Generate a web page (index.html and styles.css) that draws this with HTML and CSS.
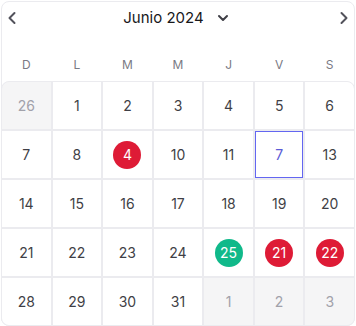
FILE: index.html
```html
<!DOCTYPE html>
<html lang="es">
<head>
<meta charset="utf-8">
<title>Calendario</title>
<link rel="stylesheet" href="styles.css">
</head>
<body>
<div class="card">
  <div class="header">
    <button class="nav" aria-label="Anterior">
      <svg width="16" height="16" viewBox="0 0 16 16"><polyline points="10.5,3 5.5,8 10.5,13" fill="none" stroke="currentColor" stroke-width="2" stroke-linecap="round" stroke-linejoin="round"/></svg>
    </button>
    <div class="title">
      <span class="month">Junio 2024</span>
      <svg class="caret" width="12" height="8" viewBox="0 0 12 8"><polyline points="2,2 6,6 10,2" fill="none" stroke="currentColor" stroke-width="2" stroke-linecap="round" stroke-linejoin="round"/></svg>
    </div>
    <button class="nav" aria-label="Siguiente">
      <svg width="16" height="16" viewBox="0 0 16 16"><polyline points="5.5,3 10.5,8 5.5,13" fill="none" stroke="currentColor" stroke-width="2" stroke-linecap="round" stroke-linejoin="round"/></svg>
    </button>
  </div>
  <div class="weekdays">
    <span>D</span><span>L</span><span>M</span><span>M</span><span>J</span><span>V</span><span>S</span>
  </div>
  <div class="grid">
    <div class="cell out">26</div>
    <div class="cell">1</div>
    <div class="cell">2</div>
    <div class="cell">3</div>
    <div class="cell">4</div>
    <div class="cell">5</div>
    <div class="cell">6</div>

    <div class="cell">7</div>
    <div class="cell">8</div>
    <div class="cell"><span class="badge red">4</span></div>
    <div class="cell">10</div>
    <div class="cell">11</div>
    <div class="cell selected">7</div>
    <div class="cell">13</div>

    <div class="cell">14</div>
    <div class="cell">15</div>
    <div class="cell">16</div>
    <div class="cell">17</div>
    <div class="cell">18</div>
    <div class="cell">19</div>
    <div class="cell">20</div>

    <div class="cell">21</div>
    <div class="cell">22</div>
    <div class="cell">23</div>
    <div class="cell">24</div>
    <div class="cell"><span class="badge green">25</span></div>
    <div class="cell"><span class="badge red">21</span></div>
    <div class="cell"><span class="badge red">22</span></div>

    <div class="cell">28</div>
    <div class="cell">29</div>
    <div class="cell">30</div>
    <div class="cell">31</div>
    <div class="cell out">1</div>
    <div class="cell out">2</div>
    <div class="cell out">3</div>
  </div>
</div>
</body>
</html>
```

FILE: styles.css
```css
* { box-sizing: border-box; }

html, body {
  margin: 0;
  padding: 0;
  background: #ffffff;
}

body {
  font-family: Inter, "Noto Sans", "Liberation Sans", sans-serif;
  color: #3f3f46;
}

.card {
  margin: 1px 1px 0 1px;
  width: 354px;
  height: 325px;
  border: 1px solid #ebebef;
  border-radius: 8px;
  display: flex;
  flex-direction: column;
}

.header {
  height: 31px;
  display: flex;
  align-items: center;
  justify-content: space-between;
  padding: 0 2px;
}

.nav {
  width: 16px;
  height: 16px;
  padding: 0;
  border: 0;
  background: none;
  color: #52525b;
  display: flex;
  align-items: center;
  justify-content: center;
}

.title {
  display: flex;
  align-items: center;
  gap: 13px;
  margin-right: 4px;
}

.month {
  font-size: 15px;
  font-weight: 400;
  color: #18181b;
  line-height: 20px;
}

.caret {
  color: #3f3f46;
}

.weekdays {
  height: 48px;
  display: grid;
  grid-template-columns: repeat(7, 1fr);
  align-items: end;
  padding-bottom: 8px;
  margin: 0 -1px;
}

.weekdays span {
  text-align: center;
  font-size: 12px;
  line-height: 16px;
  color: #7a7a84;
}

.grid {
  flex: 1;
  margin: 0 -1px -1px -1px;
  border: 1px solid #ebebef;
  border-radius: 8px;
  overflow: hidden;
  background: #ebebef;
  display: grid;
  grid-template-columns: repeat(7, 1fr);
  grid-template-rows: repeat(5, 1fr);
  gap: 2px;
}

.cell {
  background: #ffffff;
  display: flex;
  align-items: center;
  justify-content: center;
  font-size: 14px;
  color: #3f3f46;
}

.cell.out {
  background: #f5f5f6;
  color: #a1a1aa;
}

.cell.selected {
  border: 1px solid #6366f1;
  color: #5b5bd6;
}

.badge {
  width: 28px;
  height: 28px;
  border-radius: 50%;
  color: #ffffff;
  display: flex;
  align-items: center;
  justify-content: center;
  font-size: 14px;
}

.badge.red { background: #de1b36; }
.badge.green { background: #10b98a; }
```
